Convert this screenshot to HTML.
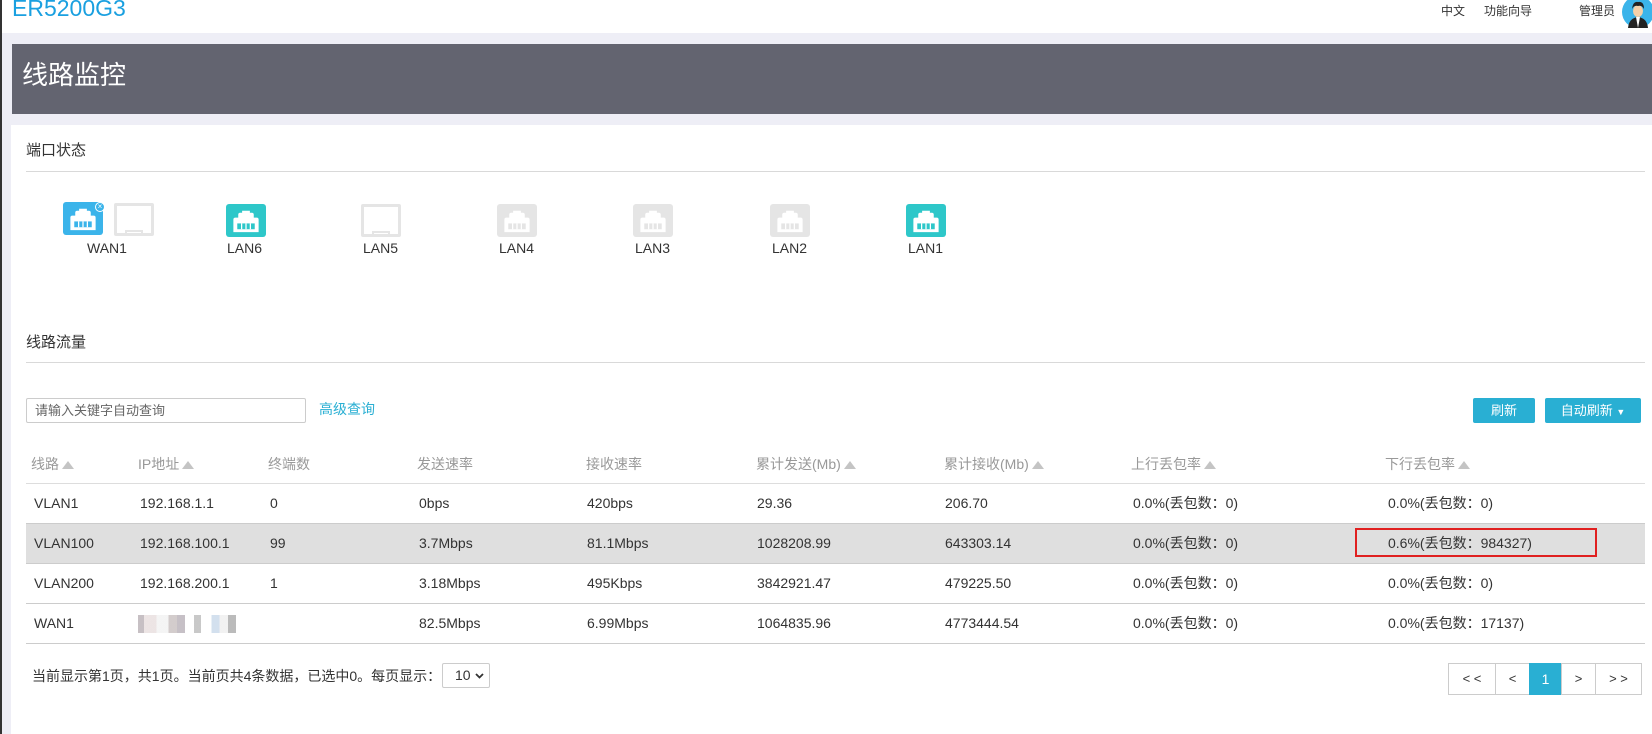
<!DOCTYPE html>
<html><head><meta charset="utf-8"><style>
*{margin:0;padding:0;box-sizing:border-box}
body{width:1652px;height:734px;overflow:hidden;background:#eeeef6;font-family:"Liberation Sans","Noto Sans CJK SC",sans-serif;color:#333;font-size:14px;position:relative}
.a{position:absolute;white-space:nowrap;line-height:17px}
#top{position:absolute;left:0;top:0;width:1652px;height:33px;background:#fff}
#lb{position:absolute;left:0;top:0;width:2px;height:734px;background:#333}
#title{position:absolute;left:12px;top:44px;width:1640px;height:70px;background:#636470}
#main{position:absolute;left:11px;top:125px;width:1641px;height:609px;background:#fff}
.line{position:absolute;left:26px;width:1619px;height:1px;background:#d9d9d9}
.hd{color:#999}
.tri{display:inline-block;width:0;height:0;border-left:6px solid transparent;border-right:6px solid transparent;border-bottom:8px solid #c4c4c4;margin-left:3px;vertical-align:0px}
.btn{position:absolute;background:#29afd3;color:#fff;border-radius:2px;text-align:center;line-height:25px;font-size:13px;top:398px;height:25px}
.pg{position:absolute;top:663px;height:32px;border:1px solid #ccc;line-height:30px;text-align:center;font-size:13px;background:#fff}
</style></head><body>
<div id="top"></div>
<div id="lb"></div>
<div class="a" style="left:12px;top:-5px;font-size:23px;color:#1aa0e0;line-height:26px">ER5200G3</div>
<div class="a" style="left:1441px;top:3px;font-size:12px">中文</div>
<div class="a" style="left:1484px;top:3px;font-size:12px">功能向导</div>
<div class="a" style="left:1579px;top:3px;font-size:12px">管理员</div>
<svg class="a" style="left:1622px;top:-4px" width="32" height="32" viewBox="0 0 32 32"><circle cx="16" cy="16" r="16" fill="#3bb4ea"/><path d="M6 32 Q7 22 16 21 Q25 22 26 32Z" fill="#222"/><path d="M14 21 L16 32 L18 21Z" fill="#fff"/><ellipse cx="16" cy="15" rx="5" ry="6" fill="#f5d0a9"/><path d="M10 13 Q11 5 16 6 Q22 5 22 13 Q20 9 16 10 Q12 9 10 13Z" fill="#222"/></svg>
<div id="title"></div>
<div class="a" style="left:22px;top:58px;font-size:26px;color:#fff;line-height:34px">线路监控</div>
<div id="main"></div>
<div class="a" style="left:26px;top:142px;font-size:15px">端口状态</div>
<div class="line" style="top:171px"></div>
<svg width="0" height="0" style="position:absolute"><defs>
<symbol id="jk" viewBox="0 0 40 34"><path d="M7 29 V16 Q7 14 9 14 H12 V11 Q12 9 14 9 H16 V7 H24 V9 H26 Q28 9 28 11 V14 H31 Q33 14 33 16 V29Z" fill="#fff"/><rect x="11" y="20" width="18" height="6" fill="currentColor"/><path d="M15.5 20v6M20 20v6M24.5 20v6" stroke="#fff" stroke-width="1.3"/></symbol>
</defs></svg>
<div class="a" style="left:63px;top:202px;width:40px;height:33px;background:#3bb4ea;border-radius:3px;color:#3bb4ea"><svg width="40" height="33"><use href="#jk"/></svg></div>
<div class="a" style="left:95px;top:202px;width:10px;height:10px;border-radius:5px;background:#3bb4ea;border:1px solid #fff;color:#fff;font-size:8px;line-height:8px;text-align:center">×</div>
<div class="a" style="left:114px;top:203px;width:40px;height:33px;border:3px solid #e5e5e5;border-radius:2px"><div style="position:absolute;left:8px;bottom:-1px;width:18px;height:4px;border:2px solid #e5e5e5;border-bottom:none"></div></div>
<div class="a" style="left:87px;top:240px;font-size:14px">WAN1</div>
<div class="a" style="left:226px;top:204px;width:40px;height:33px;background:#2ec7c9;border-radius:3px;color:#2ec7c9"><svg width="40" height="33"><use href="#jk"/></svg></div>
<div class="a" style="left:227px;top:240px">LAN6</div>
<div class="a" style="left:361px;top:204px;width:40px;height:33px;border:3px solid #e5e5e5;border-radius:2px"><div style="position:absolute;left:8px;bottom:-1px;width:18px;height:4px;border:2px solid #e5e5e5;border-bottom:none"></div></div>
<div class="a" style="left:363px;top:240px">LAN5</div>
<div class="a" style="left:497px;top:204px;width:40px;height:33px;background:#e5e5e5;border-radius:3px;color:#e5e5e5"><svg width="40" height="33"><use href="#jk"/></svg></div>
<div class="a" style="left:499px;top:240px">LAN4</div>
<div class="a" style="left:633px;top:204px;width:40px;height:33px;background:#e5e5e5;border-radius:3px;color:#e5e5e5"><svg width="40" height="33"><use href="#jk"/></svg></div>
<div class="a" style="left:635px;top:240px">LAN3</div>
<div class="a" style="left:770px;top:204px;width:40px;height:33px;background:#e5e5e5;border-radius:3px;color:#e5e5e5"><svg width="40" height="33"><use href="#jk"/></svg></div>
<div class="a" style="left:772px;top:240px">LAN2</div>
<div class="a" style="left:906px;top:204px;width:40px;height:33px;background:#2ec7c9;border-radius:3px;color:#2ec7c9"><svg width="40" height="33"><use href="#jk"/></svg></div>
<div class="a" style="left:908px;top:240px">LAN1</div>

<div class="a" style="left:26px;top:334px;font-size:15px">线路流量</div>
<div class="line" style="top:362px"></div>
<div class="a" style="left:26px;top:398px;width:280px;height:25px;border:1px solid #ccc;border-radius:2px;font-size:13px;color:#666;padding-left:8px;line-height:23px">请输入关键字自动查询</div>
<div class="a" style="left:319px;top:401px;color:#29afd3;font-size:14px">高级查询</div>
<div class="btn" style="left:1473px;width:62px">刷新</div>
<div class="btn" style="left:1545px;width:96px">自动刷新 <span style="font-size:9px">▼</span></div>

<div class="a hd" style="left:31px;top:456px">线路<span class="tri"></span></div>
<div class="a hd" style="left:138px;top:456px">IP地址<span class="tri"></span></div>
<div class="a hd" style="left:268px;top:456px">终端数</div>
<div class="a hd" style="left:417px;top:456px">发送速率</div>
<div class="a hd" style="left:586px;top:456px">接收速率</div>
<div class="a hd" style="left:756px;top:456px">累计发送(Mb)<span class="tri"></span></div>
<div class="a hd" style="left:944px;top:456px">累计接收(Mb)<span class="tri"></span></div>
<div class="a hd" style="left:1131px;top:456px">上行丢包率<span class="tri"></span></div>
<div class="a hd" style="left:1385px;top:456px">下行丢包率<span class="tri"></span></div>
<div class="line" style="top:483px;background:#ddd"></div>
<div class="a" style="left:26px;top:524px;width:1619px;height:39px;background:#dfdfdf"></div>
<div class="line" style="top:523px;background:#ccc"></div>
<div class="line" style="top:563px;background:#ccc"></div>
<div class="line" style="top:603px;background:#ccc"></div>
<div class="line" style="top:643px;background:#ccc"></div>

<div class="a" style="left:34px;top:495px">VLAN1</div><div class="a" style="left:140px;top:495px">192.168.1.1</div><div class="a" style="left:270px;top:495px">0</div><div class="a" style="left:419px;top:495px">0bps</div><div class="a" style="left:587px;top:495px">420bps</div><div class="a" style="left:757px;top:495px">29.36</div><div class="a" style="left:945px;top:495px">206.70</div><div class="a" style="left:1133px;top:495px">0.0%(丢包数：0)</div><div class="a" style="left:1388px;top:495px">0.0%(丢包数：0)</div>

<div class="a" style="left:34px;top:535px">VLAN100</div><div class="a" style="left:140px;top:535px">192.168.100.1</div><div class="a" style="left:270px;top:535px">99</div><div class="a" style="left:419px;top:535px">3.7Mbps</div><div class="a" style="left:587px;top:535px">81.1Mbps</div><div class="a" style="left:757px;top:535px">1028208.99</div><div class="a" style="left:945px;top:535px">643303.14</div><div class="a" style="left:1133px;top:535px">0.0%(丢包数：0)</div><div class="a" style="left:1388px;top:535px">0.6%(丢包数：984327)</div>
<div class="a" style="left:1355px;top:528px;width:242px;height:29px;border:2px solid #e02020"></div>

<div class="a" style="left:34px;top:575px">VLAN200</div><div class="a" style="left:140px;top:575px">192.168.200.1</div><div class="a" style="left:270px;top:575px">1</div><div class="a" style="left:419px;top:575px">3.18Mbps</div><div class="a" style="left:587px;top:575px">495Kbps</div><div class="a" style="left:757px;top:575px">3842921.47</div><div class="a" style="left:945px;top:575px">479225.50</div><div class="a" style="left:1133px;top:575px">0.0%(丢包数：0)</div><div class="a" style="left:1388px;top:575px">0.0%(丢包数：0)</div>

<div class="a" style="left:34px;top:615px">WAN1</div>
<div class="a" style="left:138px;top:615px;width:102px;height:18px;background:linear-gradient(90deg,#b9b0b5 0 6%,#e8dede 6% 18%,#f2f2f2 18% 30%,#c8c0c0 30% 38%,#b8b0b8 38% 46%,#fff 46% 55%,#bbb 55% 62%,#fff 62% 72%,#c8d8ea 72% 80%,#eee 80% 88%,#aaa 88% 96%,#fff 96%);opacity:.8"></div>
<div class="a" style="left:419px;top:615px">82.5Mbps</div><div class="a" style="left:587px;top:615px">6.99Mbps</div><div class="a" style="left:757px;top:615px">1064835.96</div><div class="a" style="left:945px;top:615px">4773444.54</div><div class="a" style="left:1133px;top:615px">0.0%(丢包数：0)</div><div class="a" style="left:1388px;top:615px">0.0%(丢包数：17137)</div>

<div class="a" style="left:32px;top:668px">当前显示第1页，共1页。当前页共4条数据，已选中0。每页显示：</div>
<div class="a" style="left:442px;top:663px;width:48px;height:25px;border:1px solid #ccc;border-radius:2px;line-height:23px;padding-left:12px">10<svg style="position:absolute;left:32px;top:9px" width="9" height="6" viewBox="0 0 9 6"><path d="M1 1 L4.5 4.5 L8 1" stroke="#333" stroke-width="1.8" fill="none"/></svg></div>

<div class="pg" style="left:1448px;width:48px">&lt; &lt;</div>
<div class="pg" style="left:1495px;width:35px">&lt;</div>
<div class="pg" style="left:1529px;width:33px;background:#29afd3;color:#fff;border-color:#29afd3;font-size:14px">1</div>
<div class="pg" style="left:1561px;width:35px">&gt;</div>
<div class="pg" style="left:1595px;width:47px">&gt; &gt;</div>
</body></html>
